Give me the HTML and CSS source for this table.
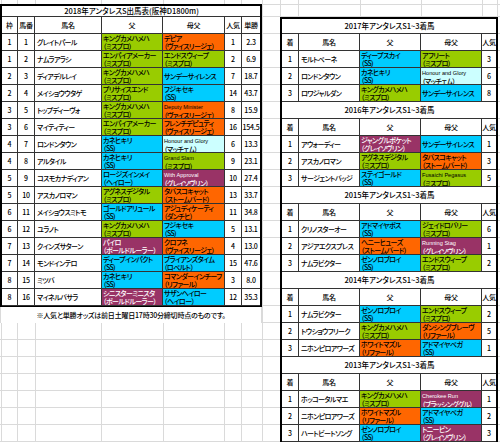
FILE: index.html
```html
<!DOCTYPE html>
<html lang="ja">
<head>
<meta charset="utf-8">
<title>2018年アンタレスS出馬表</title>
<link rel="stylesheet" href="styles.css">
</head>
<body>
<div class="sheet">
  <div class="left">
    <div class="tbl tbl-left">
      <div class="c title">2018年アンタレスS出馬表(阪神D1800m)</div>
      <div class="c ce">枠</div><div class="c ce">馬番</div><div class="c ce">馬名</div><div class="c ce">父</div><div class="c ce">母父</div><div class="c ce">人気</div><div class="c ce end">単勝</div>

      <div class="c ce">1</div><div class="c ce">1</div><div class="c nm">グレイトパール</div><div class="c two g">キングカメハメハ<br>（ミスプロ）</div><div class="c two o">デピア<br>（ヴァイスリージェ）</div><div class="c ce">1</div><div class="c ce end">2.3</div>
      <div class="c ce">1</div><div class="c ce">2</div><div class="c nm">ナムラアラシ</div><div class="c two g">エンパイアメーカー<br>（ミスプロ）</div><div class="c two g">エンドスウィープ<br>（ミスプロ）</div><div class="c ce">2</div><div class="c ce end">6.9</div>
      <div class="c ce">2</div><div class="c ce">3</div><div class="c nm">ディアデルレイ</div><div class="c two g">キングカメハメハ<br>（ミスプロ）</div><div class="c b">サンデーサイレンス</div><div class="c ce">7</div><div class="c ce end">18.7</div>
      <div class="c ce">2</div><div class="c ce">4</div><div class="c nm">メイショウウタゲ</div><div class="c two g">プリサイスエンド<br>（ミスプロ）</div><div class="c two b">フジキセキ<br>（SS）</div><div class="c ce">14</div><div class="c ce end">43.7</div>
      <div class="c ce">3</div><div class="c ce">5</div><div class="c nm">トップディーヴォ</div><div class="c two g">キングカメハメハ<br>（ミスプロ）</div><div class="c two o"><span class="en">Deputy Minister</span><br>（ヴァイスリージェ）</div><div class="c ce">8</div><div class="c ce end">15.9</div>
      <div class="c ce">3</div><div class="c ce">6</div><div class="c nm">マイティティー</div><div class="c two g">エンパイアメーカー<br>（ミスプロ）</div><div class="c two o">フレンチデピュティ<br>（ヴァイスリージェ）</div><div class="c ce">16</div><div class="c ce end">154.5</div>
      <div class="c ce">4</div><div class="c ce">7</div><div class="c nm">ロンドンタウン</div><div class="c two b">カネヒキリ<br>（SS）</div><div class="c two lc"><span class="en">Honour and Glory</span><br>（マッチェム）</div><div class="c ce">6</div><div class="c ce end">13.3</div>
      <div class="c ce">4</div><div class="c ce">8</div><div class="c nm">アルタイル</div><div class="c two b">カネヒキリ<br>（SS）</div><div class="c two g"><span class="en">Grand Slam</span><br>（ミスプロ）</div><div class="c ce">9</div><div class="c ce end">23.1</div>
      <div class="c ce">5</div><div class="c ce">9</div><div class="c nm">コスモカナディアン</div><div class="c two b">ロージズインメイ<br>（ヘイロー）</div><div class="c two m"><span class="en">With Approval</span><br>（グレイソヴリン）</div><div class="c ce">10</div><div class="c ce end">27.4</div>
      <div class="c ce">5</div><div class="c ce">10</div><div class="c nm">アスカノロマン</div><div class="c two g">アグネスデジタル<br>（ミスプロ）</div><div class="c two o">タバスコキャット<br>（ストームバード）</div><div class="c ce">13</div><div class="c ce end">33.7</div>
      <div class="c ce">6</div><div class="c ce">11</div><div class="c nm">メイショウスミトモ</div><div class="c two b">ゴールドアリュール<br>（SS）</div><div class="c two o">アジュディケーティ<br>（ダンチヒ）</div><div class="c ce">11</div><div class="c ce end">34.8</div>
      <div class="c ce">6</div><div class="c ce">12</div><div class="c nm">ユラノト</div><div class="c two g">キングカメハメハ<br>（ミスプロ）</div><div class="c two b">フジキセキ<br>（SS）</div><div class="c ce">5</div><div class="c ce end">13.1</div>
      <div class="c ce">7</div><div class="c ce">13</div><div class="c nm">クインズサターン</div><div class="c two m">パイロ<br>（ボールドルーラー）</div><div class="c two o">クロフネ<br>（ヴァイスリージェ）</div><div class="c ce">4</div><div class="c ce end">13.0</div>
      <div class="c ce">7</div><div class="c ce">14</div><div class="c nm">モンドインテロ</div><div class="c two b">ディープインパクト<br>（SS）</div><div class="c two b">ブライアンズタイム<br>（ロベルト）</div><div class="c ce">15</div><div class="c ce end">47.6</div>
      <div class="c ce">8</div><div class="c ce">15</div><div class="c nm">ミツバ</div><div class="c two b">カネヒキリ<br>（SS）</div><div class="c two o">コマンダーインチーフ<br>（リファール）</div><div class="c ce">3</div><div class="c ce end">8.0</div>
      <div class="c ce">8</div><div class="c ce">16</div><div class="c nm">マイネルバサラ</div><div class="c two m">シニスターミニスタ<br>（ボールドルーラー）</div><div class="c two b">サザンヘイロー<br>（ヘイロー）</div><div class="c ce">12</div><div class="c ce end">35.3</div>
    </div>
    <div class="note">※人気と単勝オッズは前日土曜日17時30分締切時点のものです。</div>
  </div>

  <div class="tbl tbl-right">
    <div class="c title first">2017年アンタレスS1~3着馬</div>
    <div class="c ce">着</div><div class="c ce">馬名</div><div class="c ce">父</div><div class="c ce">母父</div><div class="c ce end">人気</div>
    <div class="c ce">1</div><div class="c nm">モルトベーネ</div><div class="c two b">ディープスカイ<br>（SS）</div><div class="c two g">アフリート<br>（ミスプロ）</div><div class="c ce end">3</div>
    <div class="c ce">2</div><div class="c nm">ロンドンタウン</div><div class="c two b">カネヒキリ<br>（SS）</div><div class="c two lc"><span class="en">Honour and Glory</span><br>（マッチェム）</div><div class="c ce end">6</div>
    <div class="c ce">3</div><div class="c nm">ロワジャルダン</div><div class="c two g">キングカメハメハ<br>（ミスプロ）</div><div class="c b">サンデーサイレンス</div><div class="c ce end">8</div>

    <div class="c title">2016年アンタレスS1~3着馬</div>
    <div class="c ce">着</div><div class="c ce">馬名</div><div class="c ce">父</div><div class="c ce">母父</div><div class="c ce end">人気</div>
    <div class="c ce">1</div><div class="c nm">アウォーディー</div><div class="c two m">ジャングルポケット<br>（グレイソヴリン）</div><div class="c b">サンデーサイレンス</div><div class="c ce end">1</div>
    <div class="c ce">2</div><div class="c nm">アスカノロマン</div><div class="c two g">アグネスデジタル<br>（ミスプロ）</div><div class="c two o">タバスコキャット<br>（ストームバード）</div><div class="c ce end">3</div>
    <div class="c ce">3</div><div class="c nm">サージェントバッジ</div><div class="c two b">ステイゴールド<br>（SS）</div><div class="c two g"><span class="en">Fusaichi Pegasus</span><br>（ミスプロ）</div><div class="c ce end">5</div>

    <div class="c title">2015年アンタレスS1~3着馬</div>
    <div class="c ce">着</div><div class="c ce">馬名</div><div class="c ce">父</div><div class="c ce">母父</div><div class="c ce end">人気</div>
    <div class="c ce">1</div><div class="c nm">クリノスターオー</div><div class="c two b">アドマイヤボス<br>（SS）</div><div class="c two g">ジェイドロバリー<br>（ミスプロ）</div><div class="c ce end">6</div>
    <div class="c ce">2</div><div class="c nm">アジアエクスプレス</div><div class="c two o">ヘニーヒューズ<br>（ストームバード）</div><div class="c two m"><span class="en">Running Stag</span><br>（グレイソヴリン）</div><div class="c ce end">1</div>
    <div class="c ce">3</div><div class="c nm">ナムラビクター</div><div class="c two b">ゼンノロブロイ<br>（SS）</div><div class="c two g">エンドスウィープ<br>（ミスプロ）</div><div class="c ce end">2</div>

    <div class="c title">2014年アンタレスS1~3着馬</div>
    <div class="c ce">着</div><div class="c ce">馬名</div><div class="c ce">父</div><div class="c ce">母父</div><div class="c ce end">人気</div>
    <div class="c ce">1</div><div class="c nm">ナムラビクター</div><div class="c two b">ゼンノロブロイ<br>（SS）</div><div class="c two g">エンドスウィープ<br>（ミスプロ）</div><div class="c ce end">2</div>
    <div class="c ce">2</div><div class="c nm">トウショウフリーク</div><div class="c two g">キングカメハメハ<br>（ミスプロ）</div><div class="c two o">ダンシングブレーヴ<br>（リファール）</div><div class="c ce end">5</div>
    <div class="c ce">3</div><div class="c nm">ニホンピロアワーズ</div><div class="c two o">ホワイトマズル<br>（リファール）</div><div class="c two b">アドマイヤベガ<br>（SS）</div><div class="c ce end">1</div>

    <div class="c title">2013年アンタレスS1~3着馬</div>
    <div class="c ce">着</div><div class="c ce">馬名</div><div class="c ce">父</div><div class="c ce">母父</div><div class="c ce end">人気</div>
    <div class="c ce">1</div><div class="c nm">ホッコータルマエ</div><div class="c two g">キングカメハメハ<br>（ミスプロ）</div><div class="c two m"><span class="en">Cherokee Run</span><br>（ブラッシンググル）</div><div class="c ce end">1</div>
    <div class="c ce">2</div><div class="c nm">ニホンピロアワーズ</div><div class="c two o">ホワイトマズル<br>（リファール）</div><div class="c two b">アドマイヤベガ<br>（SS）</div><div class="c ce end">2</div>
    <div class="c ce">3</div><div class="c nm">ハートビートソング</div><div class="c two b">ゼンノロブロイ<br>（SS）</div><div class="c two m">トニービン<br>（グレイソヴリン）</div><div class="c ce end">3</div>
  </div>
</div>
</body>
</html>
```

FILE: styles.css
```css
html, body {
  margin: 0;
  padding: 0;
}

body {
  width: 500px;
  height: 442px;
  overflow: hidden;
  font-family: "Noto Sans CJK JP", "Noto Sans", sans-serif;
  font-feature-settings: "palt";
  font-size: 7px;
  font-weight: 500;
  letter-spacing: -0.6px;
  color: #000;
  background-color: #fff;
  background-image:
    linear-gradient(#dadada, #dadada),
    linear-gradient(#dadada, #dadada),
    linear-gradient(#dadada, #dadada),
    linear-gradient(#dadada, #dadada),
    linear-gradient(#dadada, #dadada),
    linear-gradient(#dadada, #dadada),
    linear-gradient(#dadada, #dadada),
    linear-gradient(#dadada, #dadada),
    linear-gradient(#dadada, #dadada),
    linear-gradient(#dadada, #dadada),
    linear-gradient(#dadada, #dadada),
    linear-gradient(#dadada, #dadada),
    linear-gradient(#dadada, #dadada),
    linear-gradient(#dadada, #dadada),
    linear-gradient(#dadada, #dadada),
    repeating-linear-gradient(to bottom, transparent 0 16px, #dadada 16px 17px);
  background-repeat: no-repeat;
  background-size:
    1px 100%, 1px 100%, 1px 100%, 1px 100%, 1px 100%, 1px 100%, 1px 100%,
    1px 100%, 1px 100%, 1px 100%, 1px 100%, 1px 100%, 1px 100%, 1px 100%,
    100% 1px,
    100% 100%;
  background-position:
    1px 0, 17px 0, 35px 0, 101px 0, 163px 0, 224px 0, 241px 0,
    262px 0, 280px 0, 298px 0, 360px 0, 421px 0, 482px 0, 497px 0,
    0 4px,
    0 0;
}

.sheet {
  display: flex;
  align-items: flex-start;
}

.left {
  margin-top: 4px;
  width: 262px;
}

.tbl {
  display: grid;
  background: #fff;
  border: 2px solid #000;
  border-bottom-width: 1px;
  box-sizing: border-box;
}

.tbl-left {
  grid-template-columns: 16px 17px 67px 61px 62px 17px 18px;
  grid-template-rows: 11px;
  grid-auto-rows: 17px;
  width: 262px;
}

.tbl-right {
  margin-left: 18px;
  margin-top: 17px;
  grid-template-columns: 17px 61px 61px 61px 14px;
  grid-template-rows: 15px;
  grid-auto-rows: 17px;
  width: 218px;
}

.c {
  box-sizing: border-box;
  display: flex;
  align-items: center;
  padding-left: 1px;
  border-right: 1px solid #333;
  border-bottom: 1px solid #333;
  white-space: nowrap;
  overflow: hidden;
  line-height: 1;
}

.ce {
  justify-content: center;
  padding-left: 0;
  letter-spacing: -0.2px;
}

.nm {
  padding-left: 2px;
}

.end {
  border-right: none;
}

.title {
  grid-column: 1 / -1;
  justify-content: center;
  border-right: none;
  font-size: 7.5px;
  letter-spacing: 0;
}

.two {
  display: block;
  line-height: 8.3px;
  padding-top: 0;
}

.en {
  font-family: "Liberation Sans", sans-serif;
  font-size: 5.6px;
  letter-spacing: 0;
}

.g { background: #99cc00; }
.b { background: #00ccff; }
.o { background: #ff6600; }
.m { background: #993366; color: #fff; }
.lc { background: #ccffff; }

.note {
  box-sizing: border-box;
  height: 16px;
  width: 262px;
  background: #fff;
  border-left: 1px solid #dadada;
  border-right: 1px solid #dadada;
  display: flex;
  align-items: center;
  justify-content: center;
  white-space: nowrap;
  letter-spacing: -0.2px;
}
```
